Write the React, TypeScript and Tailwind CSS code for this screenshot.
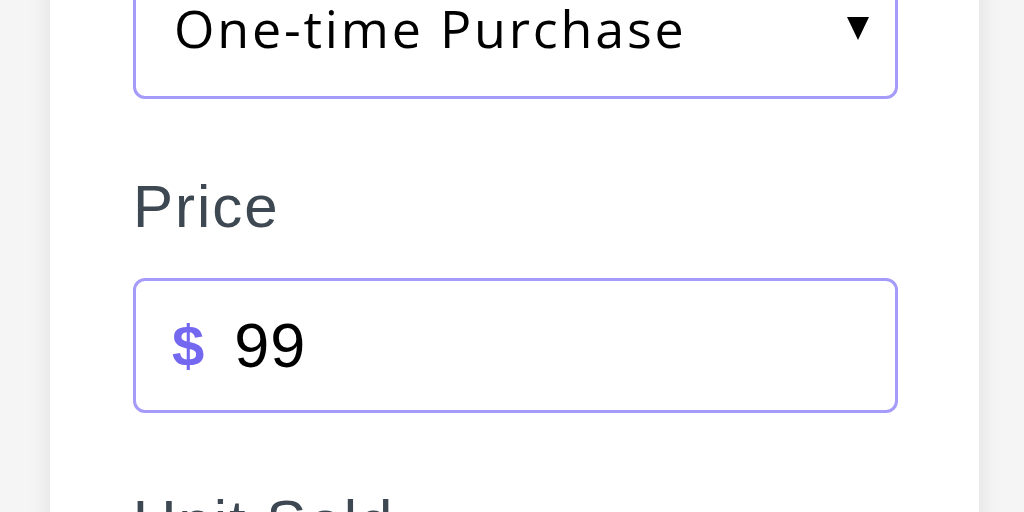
import React from "react";

export default function App() {
  return (
    <div className="w-[1024px] h-[512px] overflow-hidden bg-[#f5f5f5]">
      <div className="ml-[50px] w-[929px] h-[600px] bg-white shadow-[0_0_24px_rgba(0,0,0,0.09)] px-[83px] pr-[81px]">
        <div className="-mt-[36px] pt-0 flex flex-col">
          <div className="h-[135px] border-[3px] border-[#a59bfa] rounded-[12px] flex items-center pl-[38px] pr-[26px] justify-between">
            <span
              className="text-[52px] leading-none text-black mt-[-7px] tracking-[2.8px]"
              style={{ fontFamily: "'Open Sans', 'Noto Sans', sans-serif" }}
            >
              One-time Purchase
            </span>
            <svg width="22" height="23" viewBox="0 0 22 23" className="mt-[-6px]">
              <polygon points="0,0 22,0 11,23" fill="#000" />
            </svg>
          </div>
          <div
            className="mt-[78px] text-[60px] leading-none text-[#3d4852] tracking-[2px]"
            style={{ fontFamily: "'Liberation Sans', Arial, sans-serif" }}
          >
            Price
          </div>
          <div className="mt-[41px] h-[135px] border-[3px] border-[#a59bfa] rounded-[12px] flex items-center pl-[36px]">
            <span
              className="text-[58px] leading-none font-bold text-[#7467f0]"
              style={{ fontFamily: "'Liberation Sans', Arial, sans-serif" }}
            >
              $
            </span>
            <span
              className="ml-[30px] text-[63px] leading-none text-black tracking-[1px]"
              style={{ fontFamily: "'Liberation Sans', Arial, sans-serif" }}
            >
              99
            </span>
          </div>
          <div
            className="mt-[79px] text-[60px] leading-none text-[#3d4852] tracking-[2px]"
            style={{ fontFamily: "'Liberation Sans', Arial, sans-serif" }}
          >
            Unit Sold
          </div>
        </div>
      </div>
    </div>
  );
}
